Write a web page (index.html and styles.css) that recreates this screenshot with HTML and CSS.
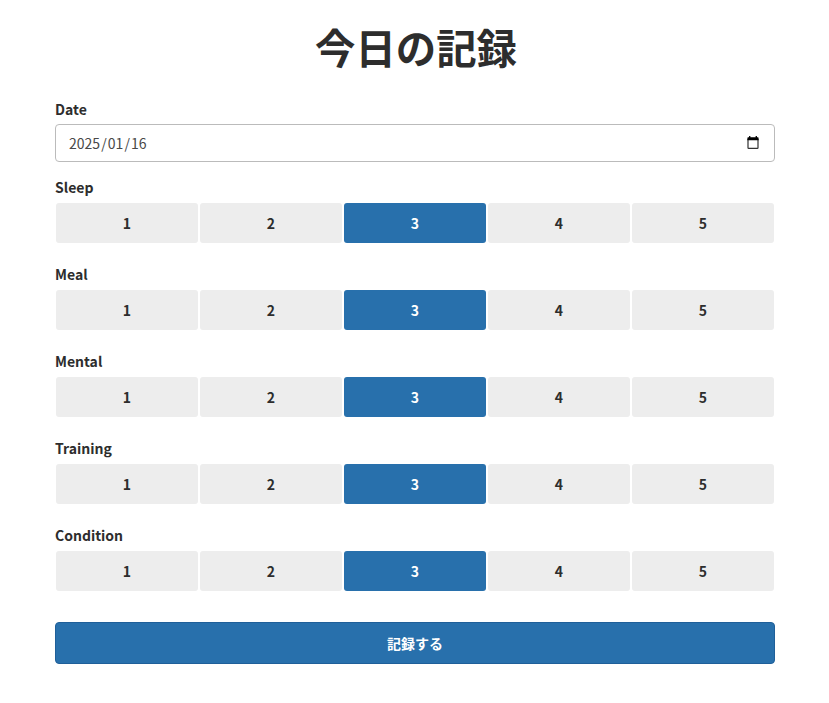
FILE: index.html
```html
<!DOCTYPE html>
<html lang="ja">
<head>
<meta charset="utf-8">
<title>今日の記録</title>
<link rel="stylesheet" href="styles.css">
</head>
<body>
<main class="container">
  <h1 class="title">今日の記録</h1>
  <form>
    <div class="field">
      <div class="label">Date</div>
      <div class="date-input">
        <span class="date-value">2025<span class="slash">/</span>01<span class="slash">/</span>16</span>
        <svg class="calendar" viewBox="0 0 12 13" width="12" height="13"><path d="M2 0h1.4v2H2zM8.6 0H10v2H8.6z" fill="#111"/><path d="M1 3v8.7q0 .6.6.6h8.8q.6 0 .6-.6V3" fill="none" stroke="#333" stroke-width="1.2"/><path d="M.4 2q0-.8.8-.8h9.6q.8 0 .8.8v2.2H.4z" fill="#000"/></svg>
      </div>
    </div>
    <div class="group"><div class="label">Sleep</div><div class="scale"><span>1</span><span>2</span><span class="active">3</span><span>4</span><span>5</span></div></div>
    <div class="group"><div class="label">Meal</div><div class="scale"><span>1</span><span>2</span><span class="active">3</span><span>4</span><span>5</span></div></div>
    <div class="group"><div class="label">Mental</div><div class="scale"><span>1</span><span>2</span><span class="active">3</span><span>4</span><span>5</span></div></div>
    <div class="group"><div class="label">Training</div><div class="scale"><span>1</span><span>2</span><span class="active">3</span><span>4</span><span>5</span></div></div>
    <div class="group"><div class="label">Condition</div><div class="scale"><span>1</span><span>2</span><span class="active">3</span><span>4</span><span>5</span></div></div>
    <button class="submit" type="button">記録する</button>
  </form>
</main>
</body>
</html>
```
FILE: styles.css
```css
* { box-sizing: border-box; }
body {
  margin: 0;
  background: #fff;
  color: #2d2d2d;
  font: 14px/20px "Noto Sans CJK JP", "Noto Sans", sans-serif;
}
.container { width: 720px; margin: 0 54px 0 55px; padding-top: 17px; }
.title {
  margin: 0;
  height: 83px;
  padding-left: 2px;
  font-size: 40.4px;
  line-height: 60px;
  font-weight: 700;
  text-align: center;
}
.label { height: 24px; line-height: 18px; font-weight: 700; }
.field { margin-bottom: 16px; }
.date-input {
  display: flex;
  align-items: center;
  justify-content: space-between;
  height: 38px;
  padding: 0 15px 0 13px;
  border: 1px solid #bbb;
  border-radius: 4px;
}
.date-value { color: #484848; }
.slash { margin: 0 1.1px; }
.calendar { margin-bottom: 1px; }
.group { height: 87px; }
.scale { display: flex; gap: 2px; padding: 1px; }
.scale span {
  flex: 1;
  height: 40px;
  line-height: 40px;
  border-radius: 3px;
  background: #ededed;
  font-weight: 700;
  text-align: center;
}
.scale .active { background: #2870ac; color: #fff; }
.submit {
  display: block;
  width: 100%;
  height: 42px;
  margin-top: 9px;
  padding: 0;
  border: 1px solid #1f5f99;
  border-radius: 4px;
  background: #2870ac;
  color: #fff;
  font: 700 14px/40px "Noto Sans CJK JP", sans-serif;
}
```
